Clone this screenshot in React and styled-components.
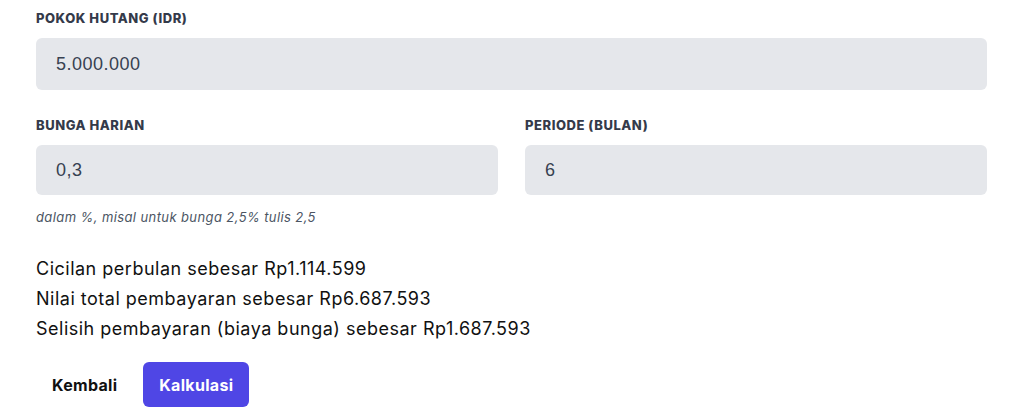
import React from "react";
import styled, { createGlobalStyle } from "styled-components";

const Global = createGlobalStyle`
  html, body { margin: 0; padding: 0; background: #ffffff; }
  body { font-family: Inter, "Noto Sans", sans-serif; color: #111827; }
  * { box-sizing: border-box; }
`;

const Page = styled.div`
  padding: 8px 29px 0 36px;
  display: flex;
  flex-direction: column;
`;

const Field = styled.div`
  display: flex;
  flex-direction: column;
`;

const Row = styled.div`
  display: grid;
  grid-template-columns: 1fr 1fr;
  column-gap: 27px;
  margin-top: ${(p) => p.$top || 0}px;
`;

const Label = styled.label`
  font-family: Inter, "Noto Sans", sans-serif;
  font-size: 13px;
  font-weight: 800;
  line-height: 20px;
  text-transform: uppercase;
  color: #343a4a;
  margin-bottom: 10px;
  letter-spacing: 0.55px;
`;

const Input = styled.input`
  height: ${(p) => p.$h || 51}px;
  width: 100%;
  border: none;
  outline: none;
  background: #e5e7eb;
  border-radius: 6px;
  padding: 0 20px;
  font-family: "Liberation Sans", Arial, sans-serif;
  font-size: 18px;
  letter-spacing: 0.5px;
  color: #374151;
`;

const Hint = styled.p`
  margin: 13px 0 0;
  font-family: Inter, "Noto Sans", sans-serif;
  font-style: italic;
  font-size: 13px;
  line-height: 18px;
  letter-spacing: 0.4px;
  color: #4b5563;
`;

const Results = styled.div`
  margin-top: 28px;
  display: flex;
  flex-direction: column;
`;

const ResultLine = styled.p`
  margin: 0;
  font-size: 18px;
  line-height: 30px;
  letter-spacing: 0.5px;
  color: #111111;
`;

const Actions = styled.div`
  margin-top: 18px;
  display: flex;
  align-items: center;
  gap: 10px;
`;

const Button = styled.button`
  height: 45px;
  padding: 0 16px;
  border: none;
  border-radius: 6px;
  font-family: Inter, "Noto Sans", sans-serif;
  font-size: 16px;
  font-weight: 700;
  letter-spacing: 0.3px;
  cursor: pointer;
  background: ${(p) => (p.$primary ? "#4f46e5" : "transparent")};
  color: ${(p) => (p.$primary ? "#ffffff" : "#111111")};
`;

export default function App() {
  return (
    <>
      <Global />
      <Page>
        <Field>
          <Label>Pokok Hutang (IDR)</Label>
          <Input defaultValue="5.000.000" $h={52} />
        </Field>
        <Row $top={25}>
          <Field>
            <Label>Bunga Harian</Label>
            <Input defaultValue="0,3" $h={50} />
          </Field>
          <Field>
            <Label>Periode (Bulan)</Label>
            <Input defaultValue="6" $h={50} />
          </Field>
        </Row>
        <Hint>dalam %, misal untuk bunga 2,5% tulis 2,5</Hint>
        <Results>
          <ResultLine>Cicilan perbulan sebesar Rp1.114.599</ResultLine>
          <ResultLine>Nilai total pembayaran sebesar Rp6.687.593</ResultLine>
          <ResultLine>Selisih pembayaran (biaya bunga) sebesar Rp1.687.593</ResultLine>
        </Results>
        <Actions>
          <Button>Kembali</Button>
          <Button $primary>Kalkulasi</Button>
        </Actions>
      </Page>
    </>
  );
}
